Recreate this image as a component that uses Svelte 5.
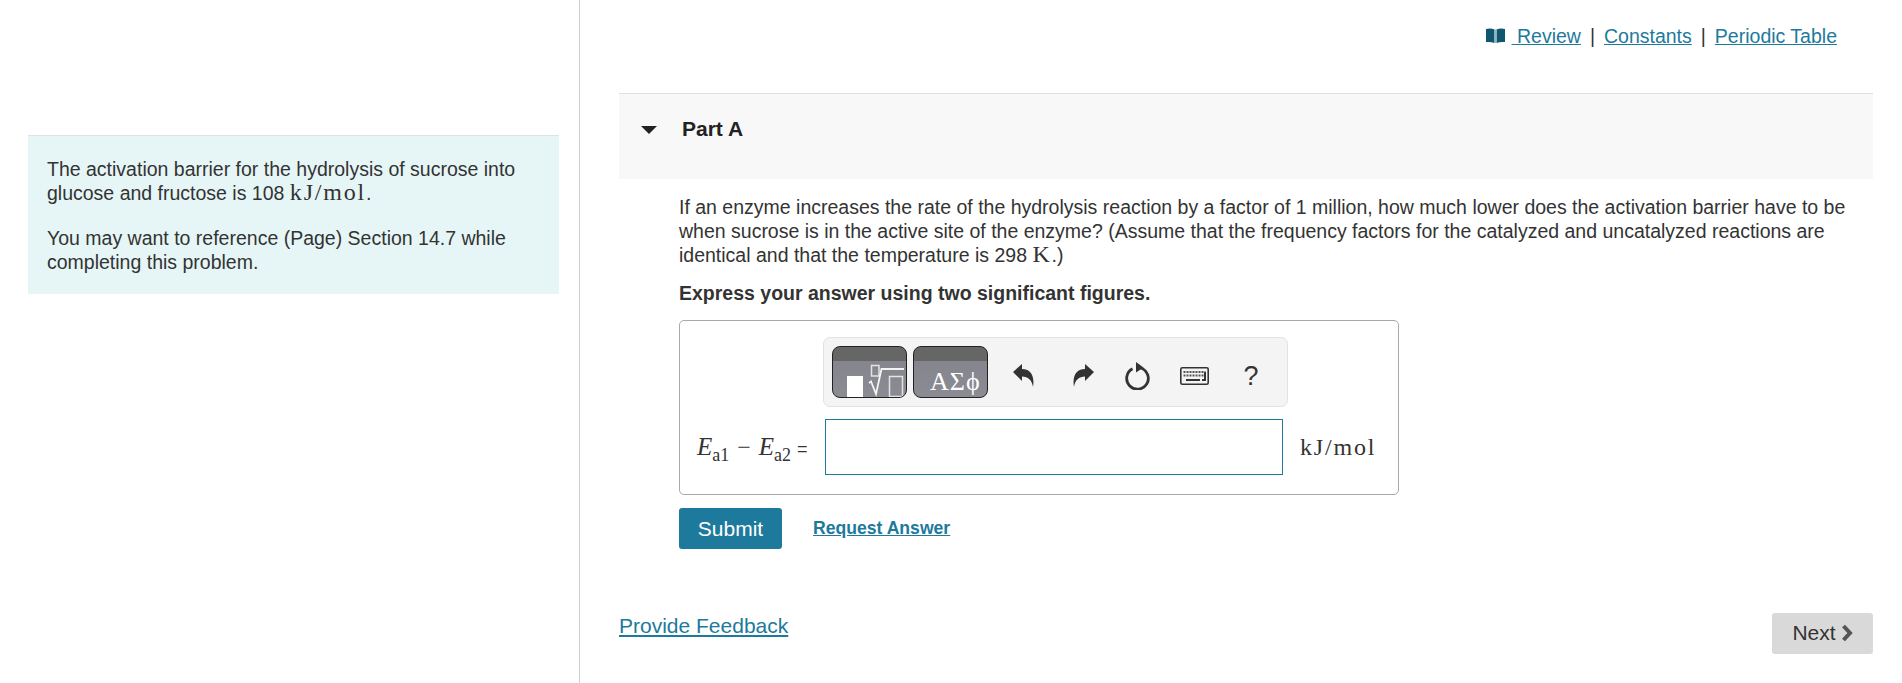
<script lang="ts">
  let answer = $state("");
</script>

<div class="page">
  <aside class="left">
    <div class="intro">
      <p>The activation barrier for the hydrolysis of sucrose into glucose and fructose is 108 <span class="math">kJ/mol</span>.</p>
      <p>You may want to reference (Page) Section 14.7 while completing this problem.</p>
    </div>
  </aside>

  <main class="right">
    <nav class="links">
      <svg class="book" viewBox="0 0 19 15" width="19" height="15" aria-hidden="true">
        <path d="M0 1 Q5 0 8.500 1.500 V15 Q5 13.500 0 14Z M10.500 1.500 Q14 0 19 1 V14 Q14 13.500 10.500 15Z" fill="#11566f" />
        <rect x="8.500" y="1.500" width="2" height="13.500" fill="#8fb5c4" />
      </svg>
      <a href="#review">&nbsp;Review</a>
      <span class="sep">|</span>
      <a href="#constants">Constants</a>
      <span class="sep">|</span>
      <a href="#table">Periodic Table</a>
    </nav>

    <section class="part">
      <header class="part-head">
        <span class="caret"></span>
        <h2>Part A</h2>
      </header>
      <div class="part-body">
        <p class="question">If an enzyme increases the rate of the hydrolysis reaction by a factor of 1 million, how much lower does the activation barrier have to be when sucrose is in the active site of the enzyme? (Assume that the frequency factors for the catalyzed and uncatalyzed reactions are identical and that the temperature is 298 <span class="math">K</span>.)</p>
        <p class="instruction">Express your answer using two significant figures.</p>

        <div class="answer-box">
          <div class="toolbar">
            <button class="tile" aria-label="Templates">
              <svg viewBox="0 0 75 51" width="75" height="51" aria-hidden="true">
                <rect x="15" y="29" width="16" height="22" fill="#fff" />
                <rect x="39.500" y="18.500" width="7.500" height="10.500" fill="none" stroke="#e4e4e4" stroke-width="1.500" />
                <path d="M37 36 L39 34.500 L44 47 L49.500 22 H72" fill="none" stroke="#f4f4f4" stroke-width="1.800" />
                <rect x="57.500" y="29.500" width="13" height="20" fill="none" stroke="#e4e4e4" stroke-width="1.500" />
              </svg>
            </button>
            <button class="tile greek">ΑΣϕ</button>
            <div class="tools">
              <svg viewBox="0 0 21 23" width="21" height="23" aria-label="Undo">
                <path d="M0 8 L9 0 V5 C17 5 22 11 20 23 C19 16 15 12.500 9 12.500 V17Z" fill="#333" />
              </svg>
              <svg viewBox="0 0 21 23" width="21" height="23" aria-label="Redo">
                <path d="M21 8 L12 0 V5 C4 5 -1 11 1 23 C2 16 6 12.500 12 12.500 V17Z" fill="#333" />
              </svg>
              <svg viewBox="0 0 25 28" width="25" height="28" aria-label="Reset">
                <path d="M15.500 6 A10.800 10.800 0 1 1 7.500 6.800" fill="none" stroke="#333" stroke-width="2.800" />
                <path d="M11 0 L18.500 5.500 L11 10.500Z" fill="#333" />
              </svg>
              <svg viewBox="0 0 29 18" width="29" height="18" aria-label="Keyboard">
                <rect x="0.800" y="0.800" width="27.400" height="16.400" rx="1.500" fill="none" stroke="#333" stroke-width="1.600" />
                <path d="M3.500 5 H25.500 M3.500 8.500 H25.500" stroke="#555" stroke-width="2" stroke-dasharray="2 1" />
                <path d="M6 13 H20 M22 13 H25 V5" fill="none" stroke="#333" stroke-width="2" />
              </svg>
              <span class="help">?</span>
            </div>
          </div>

          <div class="entry">
            <span class="label"><span class="var">E</span><sub>a1</sub><span class="minus">−</span><span class="var">E</span><sub>a2</sub><span class="eq">=</span></span>
            <input bind:value={answer} aria-label="Answer" />
            <span class="unit">kJ/mol</span>
          </div>
        </div>

        <div class="actions">
          <button class="submit">Submit</button>
          <a href="#answer" class="request">Request Answer</a>
        </div>
      </div>
    </section>

    <footer class="foot">
      <a href="#feedback" class="feedback">Provide Feedback</a>
      <button class="next">Next
        <svg viewBox="0 0 12 18" width="12" height="18" aria-hidden="true">
          <path d="M2.500 2 L9 9 L2.500 16" fill="none" stroke="#555" stroke-width="4" />
        </svg>
      </button>
    </footer>
  </main>
</div>

<style>
  :global(body) {
    margin: 0;
    background: #fff;
    color: #333;
    font-family: "Liberation Sans", Arial, sans-serif;
    font-size: 19.5px;
  }
  .page {
    display: grid;
    grid-template-columns: 579px 1fr;
    height: 683px;
    overflow: hidden;
  }
  .left {
    padding: 135px 20px 0 28px;
    border-right: 1px solid #c7d0d8;
    box-sizing: border-box;
    width: 580px;
  }
  .intro {
    background: #e6f6f7;
    border-top: 1px solid #dde3e4;
    padding: 21px 19px 20px;
    line-height: 24px;
  }
  .intro p {
    margin: 0;
  }
  .intro p + p {
    margin-top: 21px;
  }
  .math {
    font-family: "Liberation Serif", "DejaVu Serif", serif;
    font-size: 24px;
    letter-spacing: 1.8px;
    line-height: 0;
  }
  .right {
    padding: 0 29px 0 40px;
    display: flex;
    flex-direction: column;
  }
  .links {
    height: 93px;
    box-sizing: border-box;
    padding: 24px 36px 0 0;
    display: flex;
    justify-content: flex-end;
    align-items: flex-start;
    gap: 9px;
    line-height: 24px;
  }
  a {
    color: #1d7a9c;
    text-decoration: underline;
  }
  .book {
    margin: 4px -2px 0 0;
  }
  .sep {
    color: #333;
  }
  .part-head {
    height: 86px;
    box-sizing: border-box;
    background: #f8f8f8;
    border-top: 1px solid #e0e0e0;
    display: flex;
    align-items: flex-start;
    padding: 23px 0 0 22px;
  }
  .caret {
    width: 0;
    height: 0;
    margin-top: 9px;
    border-left: 8px solid transparent;
    border-right: 8px solid transparent;
    border-top: 8px solid #222;
  }
  h2 {
    margin: 0 0 0 25px;
    font-size: 21px;
    line-height: 24px;
    font-weight: bold;
    color: #222;
  }
  .part-body {
    padding: 16px 0 0 60px;
  }
  .question {
    margin: 0;
    line-height: 24px;
  }
  .instruction {
    margin: 14px 0 0;
    font-weight: bold;
    line-height: 24px;
  }
  .answer-box {
    width: 720px;
    height: 175px;
    box-sizing: border-box;
    margin-top: 15px;
    border: 1px solid #aaa;
    border-radius: 5px;
    padding: 16px 0 0 0;
  }
  .toolbar {
    width: 465px;
    height: 70px;
    box-sizing: border-box;
    margin-left: 143px;
    padding: 8px;
    display: flex;
    gap: 6px;
    background: #f4f4f4;
    border: 1px solid #e2e2e2;
    border-radius: 7px;
  }
  .tile {
    flex: none;
    width: 75px;
    height: 52px;
    padding: 0;
    border: 1px solid #222;
    border-radius: 8px;
    overflow: hidden;
    background: linear-gradient(#666 0 14px, #85858d 14px, #8b8b93 100%);
    color: #fff;
    display: block;
  }
  .tile svg {
    display: block;
    margin: -1px;
  }
  .greek {
    font-family: "Liberation Serif", "DejaVu Serif", serif;
    font-size: 26px;
    padding: 19px 0 0 16px;
    line-height: 30px;
    text-align: left;
    letter-spacing: 1px;
  }
  .tools {
    flex: none;
    display: grid;
    grid-template-columns: 58px 62px 46px 68px 46px;
    align-items: center;
    justify-items: center;
    padding-top: 7px;
    box-sizing: border-box;
  }
  .tools svg {
    display: block;
  }
  .help {
    font-size: 27px;
    line-height: 30px;
  }
  .entry {
    display: flex;
    align-items: center;
    margin-top: 12px;
    padding-left: 17px;
  }
  .label {
    width: 128px;
    flex: none;
    font-family: "Liberation Serif", "DejaVu Serif", serif;
    font-size: 25px;
    white-space: nowrap;
  }
  .var {
    font-style: italic;
  }
  sub {
    font-size: 18px;
    line-height: 0;
  }
  .minus {
    padding: 0 8px;
    font-size: 24px;
  }
  .eq {
    margin-left: 6px;
    font-family: "Liberation Sans", Arial, sans-serif;
    font-size: 18px;
  }
  input {
    width: 458px;
    height: 56px;
    box-sizing: border-box;
    border: 1px solid #1d7a9c;
    background: #fff;
    outline: none;
    padding: 0 8px;
    font: inherit;
  }
  .unit {
    margin-left: 17px;
    font-family: "Liberation Serif", "DejaVu Serif", serif;
    font-size: 24px;
    letter-spacing: 1.8px;
  }
  .actions {
    display: flex;
    align-items: center;
    margin-top: 13px;
  }
  .submit {
    width: 103px;
    height: 41px;
    border: none;
    border-radius: 3px;
    background: #1d7a9c;
    color: #fff;
    font: inherit;
    font-size: 21px;
    padding: 0;
  }
  .request {
    margin-left: 31px;
    font-weight: bold;
    font-size: 17.6px;
  }
  .foot {
    display: flex;
    justify-content: space-between;
    align-items: flex-start;
    margin-top: 64px;
  }
  .feedback {
    margin-top: 1px;
    font-size: 21px;
    line-height: 24px;
    color: #1d7a9c;
  }
  .next {
    width: 101px;
    height: 41px;
    border: none;
    border-radius: 3px;
    background: #d9d9d9;
    color: #333;
    font: inherit;
    font-size: 21px;
    padding: 0 0 2px;
    display: flex;
    align-items: center;
    justify-content: center;
    gap: 5px;
  }
</style>
